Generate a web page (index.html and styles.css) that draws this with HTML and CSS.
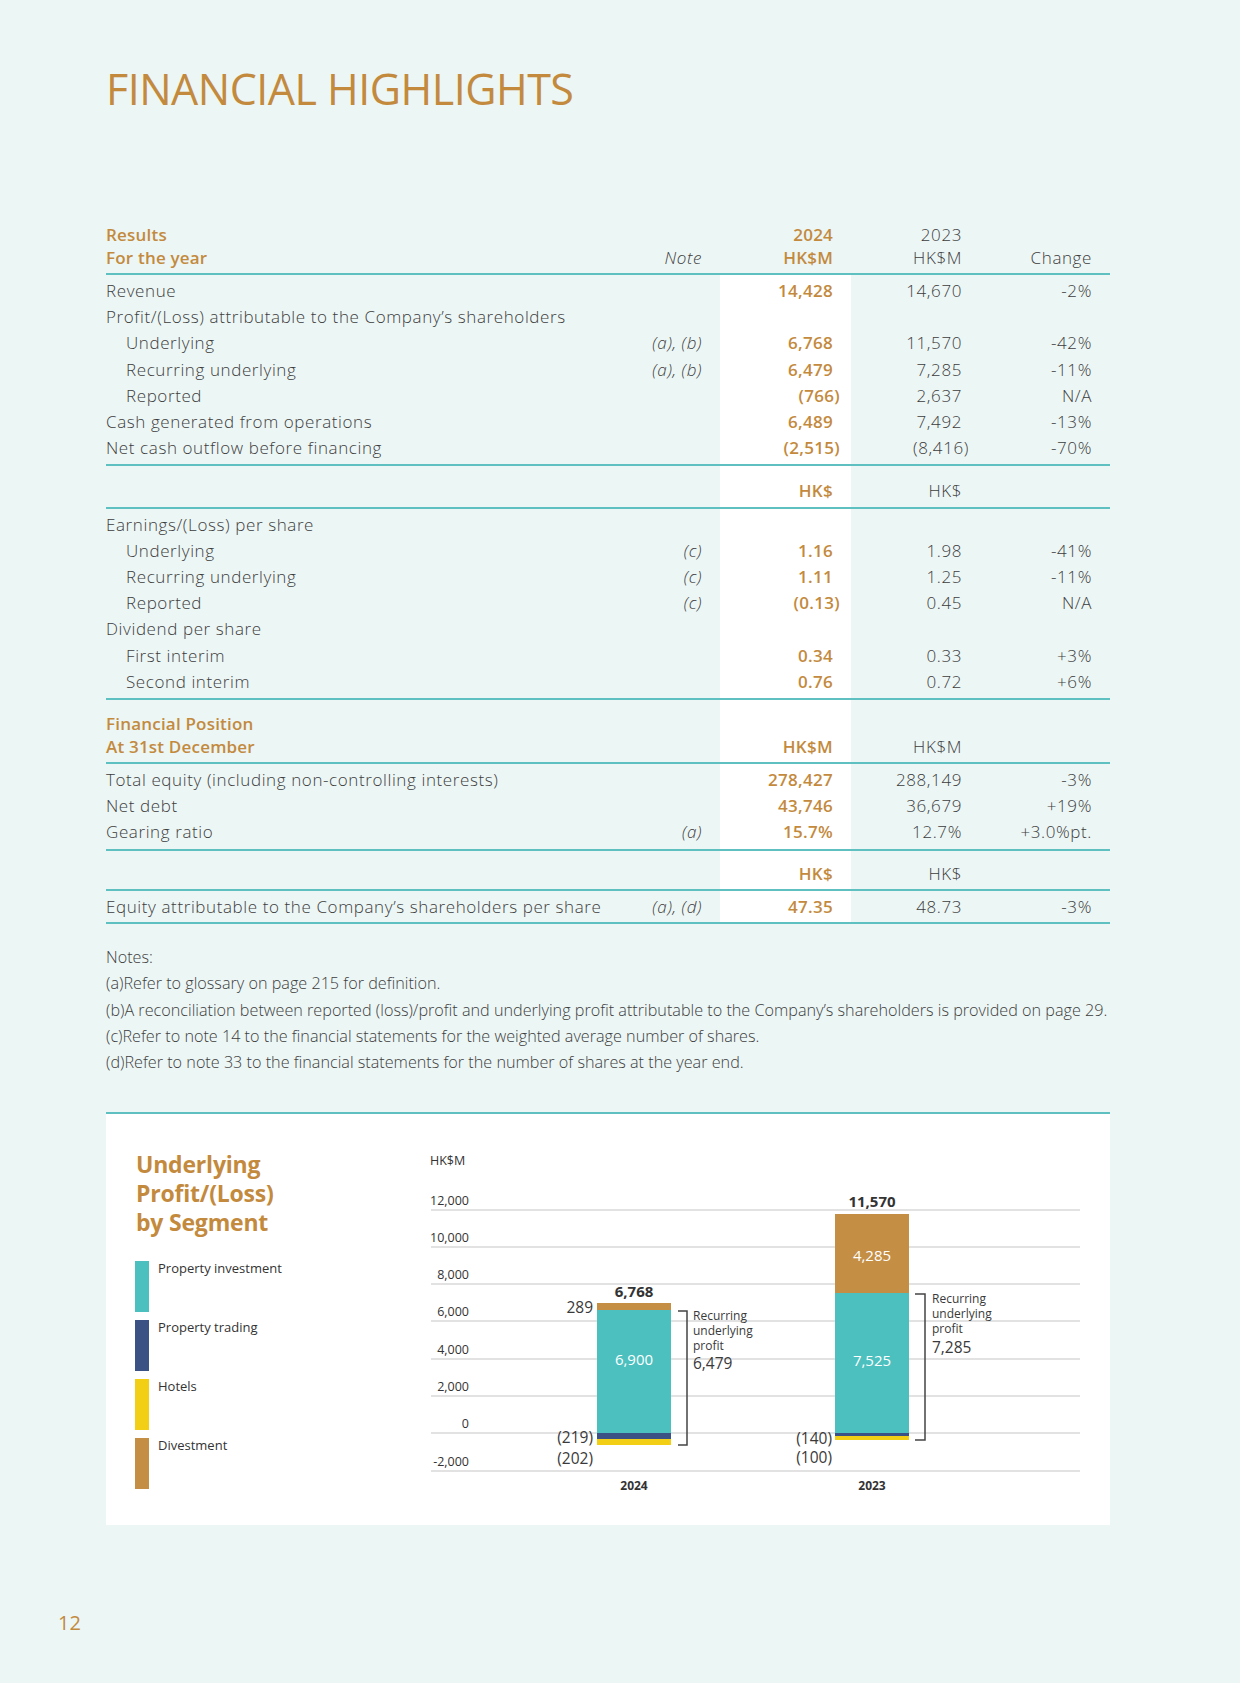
FILE: index.html
```html
<!DOCTYPE html>
<html lang="en">
<head>
<meta charset="utf-8">
<title>Financial Highlights</title>
<link rel="stylesheet" href="styles.css">
</head>
<body>
<div class="page">
  <h1 class="title">FINANCIAL HIGHLIGHTS</h1>

  <table class="fin">
    <colgroup>
      <col class="c-lbl"><col class="c-note"><col class="c-cy"><col class="c-py"><col class="c-chg">
    </colgroup>
    <thead>
      <tr class="hdr">
        <th class="lbl gold">Results<br>For the year</th>
        <th class="note">Note</th>
        <th class="cy gold">2024<br>HK$M</th>
        <th class="py">2023<br>HK$M</th>
        <th class="chg">Change</th>
      </tr>
    </thead>
    <tbody>
      <tr class="first"><td class="lbl">Revenue</td><td class="note"></td><td class="cy">14,428</td><td class="py">14,670</td><td class="chg">-2%</td></tr>
      <tr><td class="lbl">Profit/(Loss) attributable to the Company’s shareholders</td><td class="note"></td><td class="cy"></td><td class="py"></td><td class="chg"></td></tr>
      <tr><td class="lbl ind">Underlying</td><td class="note">(a), (b)</td><td class="cy">6,768</td><td class="py">11,570</td><td class="chg">-42%</td></tr>
      <tr><td class="lbl ind">Recurring underlying</td><td class="note">(a), (b)</td><td class="cy">6,479</td><td class="py">7,285</td><td class="chg">-11%</td></tr>
      <tr><td class="lbl ind">Reported</td><td class="note"></td><td class="cy"><span class="p">(766)</span></td><td class="py">2,637</td><td class="chg">N/A</td></tr>
      <tr><td class="lbl">Cash generated from operations</td><td class="note"></td><td class="cy">6,489</td><td class="py">7,492</td><td class="chg">-13%</td></tr>
      <tr class="last"><td class="lbl">Net cash outflow before financing</td><td class="note"></td><td class="cy"><span class="p">(2,515)</span></td><td class="py"><span class="p">(8,416)</span></td><td class="chg">-70%</td></tr>
    </tbody>
    <tbody>
      <tr class="unit"><td class="lbl"></td><td class="note"></td><td class="cy">HK$</td><td class="py">HK$</td><td class="chg"></td></tr>
    </tbody>
    <tbody>
      <tr class="first"><td class="lbl">Earnings/(Loss) per share</td><td class="note"></td><td class="cy"></td><td class="py"></td><td class="chg"></td></tr>
      <tr><td class="lbl ind">Underlying</td><td class="note">(c)</td><td class="cy">1.16</td><td class="py">1.98</td><td class="chg">-41%</td></tr>
      <tr><td class="lbl ind">Recurring underlying</td><td class="note">(c)</td><td class="cy">1.11</td><td class="py">1.25</td><td class="chg">-11%</td></tr>
      <tr><td class="lbl ind">Reported</td><td class="note">(c)</td><td class="cy"><span class="p">(0.13)</span></td><td class="py">0.45</td><td class="chg">N/A</td></tr>
      <tr><td class="lbl">Dividend per share</td><td class="note"></td><td class="cy"></td><td class="py"></td><td class="chg"></td></tr>
      <tr><td class="lbl ind">First interim</td><td class="note"></td><td class="cy">0.34</td><td class="py">0.33</td><td class="chg">+3%</td></tr>
      <tr class="last"><td class="lbl ind">Second interim</td><td class="note"></td><td class="cy">0.76</td><td class="py">0.72</td><td class="chg">+6%</td></tr>
    </tbody>
    <tbody>
      <tr class="subhdr"><td class="lbl gold">Financial Position<br>At 31st December</td><td class="note"></td><td class="cy">HK$M</td><td class="py">HK$M</td><td class="chg"></td></tr>
    </tbody>
    <tbody>
      <tr class="first"><td class="lbl">Total equity (including non-controlling interests)</td><td class="note"></td><td class="cy">278,427</td><td class="py">288,149</td><td class="chg">-3%</td></tr>
      <tr><td class="lbl">Net debt</td><td class="note"></td><td class="cy">43,746</td><td class="py">36,679</td><td class="chg">+19%</td></tr>
      <tr class="last"><td class="lbl">Gearing ratio</td><td class="note">(a)</td><td class="cy">15.7%</td><td class="py">12.7%</td><td class="chg">+3.0%pt.</td></tr>
    </tbody>
    <tbody>
      <tr class="unit2"><td class="lbl"></td><td class="note"></td><td class="cy">HK$</td><td class="py">HK$</td><td class="chg"></td></tr>
    </tbody>
    <tbody>
      <tr class="first last"><td class="lbl">Equity attributable to the Company’s shareholders per share</td><td class="note">(a), (d)</td><td class="cy">47.35</td><td class="py">48.73</td><td class="chg">-3%</td></tr>
    </tbody>
  </table>

  <div class="notes">
    <p>Notes:</p>
    <p>(a)Refer to glossary on page 215 for definition.</p>
    <p>(b)A reconciliation between reported (loss)/profit and underlying profit attributable to the Company’s shareholders is provided on page 29.</p>
    <p>(c)Refer to note 14 to the financial statements for the weighted average number of shares.</p>
    <p>(d)Refer to note 33 to the financial statements for the number of shares at the year end.</p>
  </div>

  <section class="panel">
    <div class="legend">
      <h2 class="ptitle">Underlying<br>Profit/(Loss)<br>by Segment</h2>
      <ul class="keys">
        <li class="key"><span class="sw sw-inv"></span><span class="klbl">Property investment</span></li>
        <li class="key"><span class="sw sw-trd"></span><span class="klbl">Property trading</span></li>
        <li class="key"><span class="sw sw-htl"></span><span class="klbl">Hotels</span></li>
        <li class="key"><span class="sw sw-div"></span><span class="klbl">Divestment</span></li>
      </ul>
    </div>
    <svg class="chart" width="690" height="411" viewBox="420 1116 690 411" xmlns="http://www.w3.org/2000/svg">
      <g class="grid">
        <line x1="431" x2="1080" y1="1212" y2="1212"/>
        <line x1="431" x2="1080" y1="1249" y2="1249"/>
        <line x1="431" x2="1080" y1="1286" y2="1286"/>
        <line x1="431" x2="1080" y1="1323" y2="1323"/>
        <line x1="431" x2="1080" y1="1361" y2="1361"/>
        <line x1="431" x2="1080" y1="1398" y2="1398"/>
        <line x1="431" x2="1080" y1="1435" y2="1435"/>
        <line x1="431" x2="1080" y1="1473" y2="1473"/>
      </g>
      <text class="ax" x="430" y="1167">HK$M</text>
      <g class="ax" text-anchor="end">
        <text x="469" y="1207">12,000</text>
        <text x="469" y="1244">10,000</text>
        <text x="469" y="1281">8,000</text>
        <text x="469" y="1318">6,000</text>
        <text x="469" y="1356">4,000</text>
        <text x="469" y="1393">2,000</text>
        <text x="469" y="1430">0</text>
        <text x="469" y="1468">-2,000</text>
      </g>

      <rect x="597" y="1305" width="74" height="7" fill="#c48e45"/>
      <rect x="597" y="1312" width="74" height="123" fill="#4bc0be"/>
      <rect x="597" y="1435" width="74" height="6" fill="#3b5284"/>
      <rect x="597" y="1441" width="74" height="6" fill="#f2cf14"/>
      <text class="tot" x="634" y="1299" text-anchor="middle">6,768</text>
      <text class="val" x="593" y="1315" text-anchor="end">289</text>
      <text class="inb" x="634" y="1367" text-anchor="middle">6,900</text>
      <text class="val" x="593" y="1445" text-anchor="end">(219)</text>
      <text class="val" x="593" y="1466" text-anchor="end">(202)</text>
      <text class="yr" x="634" y="1492" text-anchor="middle">2024</text>
      <path class="brk" d="M678 1313 H687 V1447 H678"/>
      <text class="bt" x="693" y="1322">Recurring</text>
      <text class="bt" x="693" y="1337">underlying</text>
      <text class="bt" x="693" y="1352">profit</text>
      <text class="bv" x="693" y="1371">6,479</text>

      <rect x="835" y="1216" width="74" height="79" fill="#c48e45"/>
      <rect x="835" y="1295" width="74" height="140" fill="#4bc0be"/>
      <rect x="835" y="1435" width="74" height="3" fill="#3b5284"/>
      <rect x="835" y="1438" width="74" height="4" fill="#f2cf14"/>
      <text class="tot" x="872" y="1209" text-anchor="middle">11,570</text>
      <text class="inb" x="872" y="1263" text-anchor="middle">4,285</text>
      <text class="inb" x="872" y="1368" text-anchor="middle">7,525</text>
      <text class="val" x="832" y="1446" text-anchor="end">(140)</text>
      <text class="val" x="832" y="1465" text-anchor="end">(100)</text>
      <text class="yr" x="872" y="1492" text-anchor="middle">2023</text>
      <path class="brk" d="M915 1296 H925 V1442 H915"/>
      <text class="bt" x="932" y="1305">Recurring</text>
      <text class="bt" x="932" y="1320">underlying</text>
      <text class="bt" x="932" y="1335">profit</text>
      <text class="bv" x="932" y="1355">7,285</text>
    </svg>
  </section>

  <div class="pageno">12</div>
</div>
</body>
</html>
```

FILE: styles.css
```css
html, body {
  margin: 0;
  padding: 0;
}
body {
  background: #ecf6f5;
  font-family: "Open Sans", "Noto Sans", sans-serif;
  color: #3d3d3d;
}
.page {
  width: 1240px;
  height: 1683px;
  position: relative;
  box-sizing: border-box;
  padding: 67px 0 0 106px;
}
.title {
  margin: 0;
  font-size: 43px;
  line-height: 43px;
  font-weight: 500;
  color: #c38a3e;
  letter-spacing: -0.5px;
}
.gold { color: #c38a3e; }

/* ---------- table ---------- */
.fin {
  margin-top: 113px;
  width: 1004px;
  border-collapse: collapse;
  table-layout: fixed;
  font-size: 17px;
  font-weight: 300;
  letter-spacing: 0.6px;
}
.c-lbl { width: 534px; }
.c-note { width: 80px; }
.c-cy { width: 131px; }
.c-py { width: 129px; }
.c-chg { width: 130px; }

.fin th, .fin td {
  padding: 0 18px 0 0;
  text-align: right;
  line-height: 26.2px;
  white-space: nowrap;
  vertical-align: bottom;
}
.fin .lbl { text-align: left; padding: 0; }
.fin .ind { padding-left: 20px; }
.fin .note { font-style: italic; }
.fin td.cy {
  background: #ffffff;
  color: #c38a3e;
  font-weight: 600;
  letter-spacing: 0.3px;
}
.fin .p { margin-right: -7px; }

.fin thead th {
  font-weight: 300;
  line-height: 23px;
  padding-bottom: 4px;
}
.fin thead th.lbl { padding-bottom: 4px; }
.fin thead th.gold { font-weight: 600; letter-spacing: 0.2px; }

.fin tbody { border-top: 2px solid #5fc0c1; }
.fin { border-bottom: 2px solid #5fc0c1; }

.fin tr.first td { padding-top: 3px; }
.fin tr.last td { padding-bottom: 3px; }
.fin tr.unit td { padding-top: 12px; padding-bottom: 2px; }
.fin tr.unit2 td { padding-top: 10px; padding-bottom: 2px; }
.fin tr.subhdr td { line-height: 23px; padding-top: 12px; padding-bottom: 4px; }
.fin tr.subhdr td.lbl { font-weight: 600; letter-spacing: 0.2px; }
.fin tr.first.last td { padding-top: 3px; padding-bottom: 2px; }

/* ---------- notes ---------- */
.notes {
  margin-top: 20px;
  font-size: 16.2px;
  font-weight: 300;
  line-height: 26.3px;
}
.notes p { margin: 0; }

/* ---------- chart panel ---------- */
.panel {
  margin-top: 36px;
  width: 1004px;
  height: 413px;
  box-sizing: border-box;
  background: #ffffff;
  border-top: 2px solid #5fc0c1;
  display: flex;
}
.legend {
  width: 314px;
  box-sizing: border-box;
  padding: 36px 0 0 30px;
}
.ptitle {
  margin: 0;
  font-size: 23px;
  line-height: 29px;
  font-weight: 700;
  color: #c38a3e;
  letter-spacing: -0.2px;
}
.keys {
  list-style: none;
  margin: 24px 0 0 0;
  padding: 0;
}
.key {
  display: flex;
  align-items: flex-start;
  margin-bottom: 8px;
}
.sw {
  width: 14px;
  height: 51px;
  flex: none;
  margin-left: -1px;
}
.sw-inv { background: #4bc0be; }
.sw-trd { background: #3b5284; }
.sw-htl { background: #f2cf14; }
.sw-div { background: #c48e45; }
.klbl {
  margin-left: 9px;
  font-size: 13px;
  line-height: 14px;
  color: #333;
}
.chart {
  display: block;
  font-family: "Open Sans", "Noto Sans", sans-serif;
}
.grid line { stroke: #d9d9d9; stroke-width: 1.5; }
.ax { font-size: 12.5px; fill: #333; }
.tot { font-size: 15px; font-weight: 700; fill: #333; }
.val { font-size: 15.5px; fill: #3a3a3a; }
.inb { font-size: 15px; fill: #ffffff; }
.yr { font-size: 12px; font-weight: 700; fill: #333; }
.brk { fill: none; stroke: #444; stroke-width: 1.5; }
.bt { font-size: 12px; fill: #3a3a3a; }
.bv { font-size: 15.5px; fill: #3a3a3a; }

/* ---------- page number ---------- */
.pageno {
  position: absolute;
  left: 58px;
  top: 1610px;
  font-size: 20px;
  line-height: 26px;
  color: #c38a3e;
}
```
